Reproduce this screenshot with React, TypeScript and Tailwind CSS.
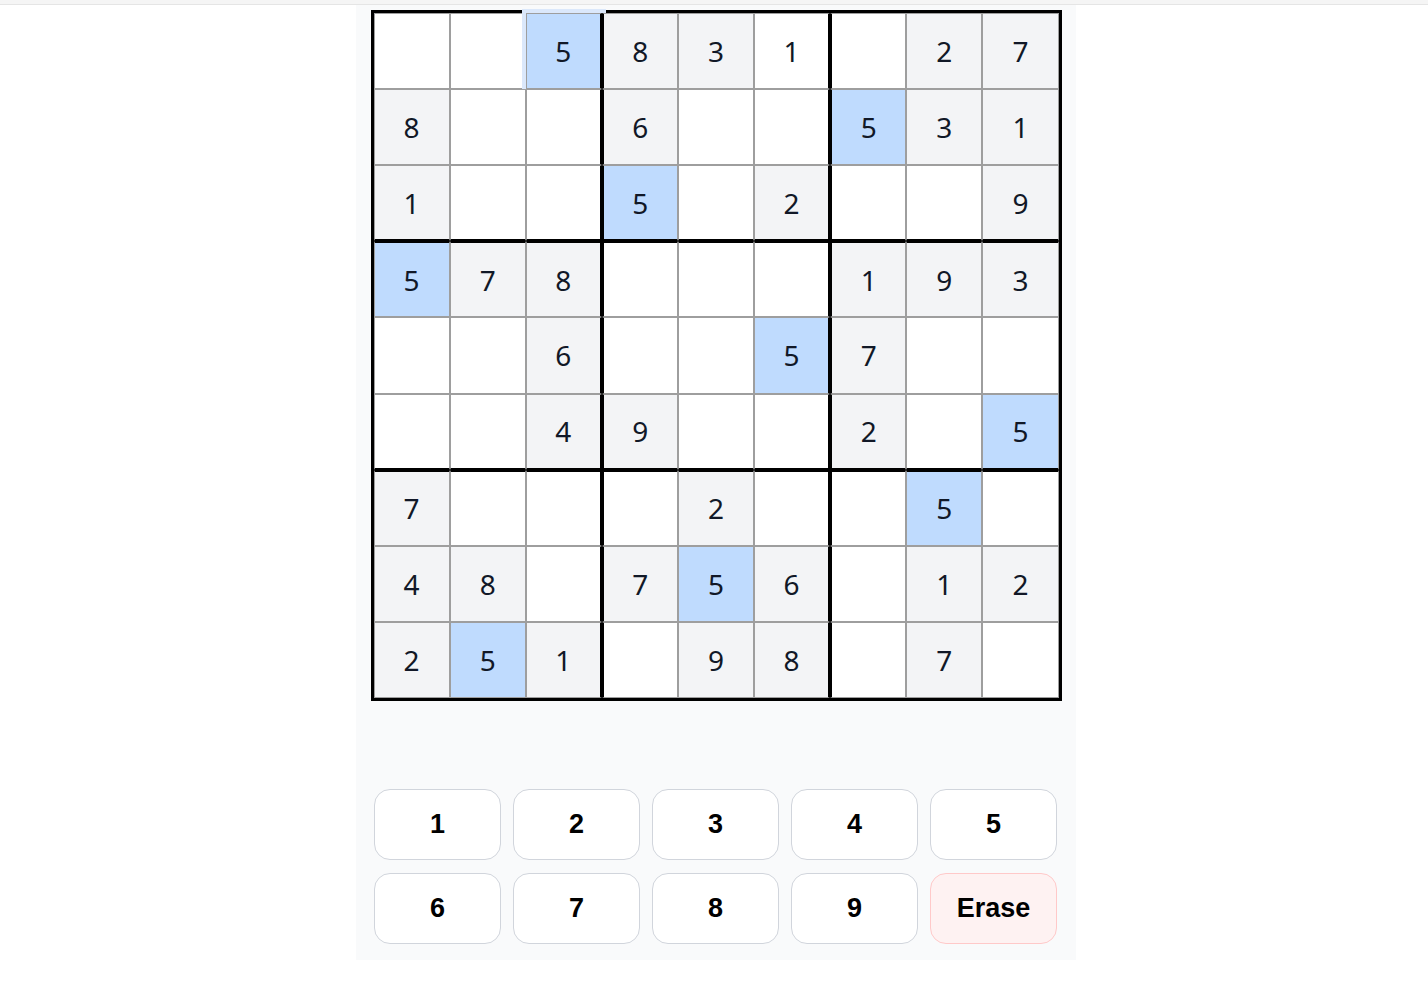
import React from "react";

const board: number[][] = [
  [0, 0, 5, 8, 3, 1, 0, 2, 7],
  [8, 0, 0, 6, 0, 0, 5, 3, 1],
  [1, 0, 0, 5, 0, 2, 0, 0, 9],
  [5, 7, 8, 0, 0, 0, 1, 9, 3],
  [0, 0, 6, 0, 0, 5, 7, 0, 0],
  [0, 0, 4, 9, 0, 0, 2, 0, 5],
  [7, 0, 0, 0, 2, 0, 0, 5, 0],
  [4, 8, 0, 7, 5, 6, 0, 1, 2],
  [2, 5, 1, 0, 9, 8, 0, 7, 0],
];

// cells the player filled in (not part of the puzzle)
const userCells = new Set(["0-2", "0-5"]);
const selected = "0-2";
const highlight = 5;

function Cell({ r, c, value }: { r: number; c: number; value: number }) {
  const key = `${r}-${c}`;
  const isUser = userCells.has(key);
  let bg = "bg-white";
  if (value && value === highlight) bg = "bg-[#bfdbfe]";
  else if (value && !isUser) bg = "bg-[#f3f4f6]";

  const cls = [
    "flex items-center justify-center border border-[#9e9e9e] text-[28px] text-[#111827] select-none",
    bg,
    c % 3 === 2 && c < 8 ? "border-r-2 border-r-black" : "",
    c % 3 === 0 && c > 0 ? "border-l-2 border-l-black" : "",
    r % 3 === 2 && r < 8 ? "border-b-2 border-b-black" : "",
    r % 3 === 0 && r > 0 ? "border-t-2 border-t-black" : "",
    key === selected ? "ring-4 ring-[#dbe8fb]" : "",
  ].join(" ");

  return (
    <div className={cls} style={{ fontFamily: '"Noto Sans", sans-serif' }}>
      {value ? value : ""}
    </div>
  );
}

export default function App() {
  const keys = ["1", "2", "3", "4", "5", "6", "7", "8", "9"];

  return (
    <div className="min-h-screen bg-white">
      <div className="h-[5px] bg-[#f5f5f5] border-b border-[#e5e5e5]" />
      <div className="flex justify-center pl-1">
        <div className="w-[720px] bg-gray-50 pt-[5px] pb-4">
          <div className="mx-auto grid h-[691px] w-[691px] grid-cols-9 grid-rows-9 border-[3px] border-black">
            {board.map((row, r) =>
              row.map((value, c) => <Cell key={`${r}-${c}`} r={r} c={c} value={value} />)
            )}
          </div>

          <div
            className="mx-auto mt-[88px] grid w-[684px] grid-cols-5 gap-x-3 gap-y-[13px] pr-px"
            style={{ fontFamily: '"Liberation Sans", Arial, sans-serif' }}
          >
            {keys.map((k) => (
              <button
                key={k}
                className="h-[71px] rounded-2xl border border-gray-300 bg-white text-[27px] font-bold text-black"
              >
                {k}
              </button>
            ))}
            <button className="h-[71px] rounded-2xl border border-red-200 bg-red-50 text-[27px] font-bold text-black">
              Erase
            </button>
          </div>
        </div>
      </div>
    </div>
  );
}
